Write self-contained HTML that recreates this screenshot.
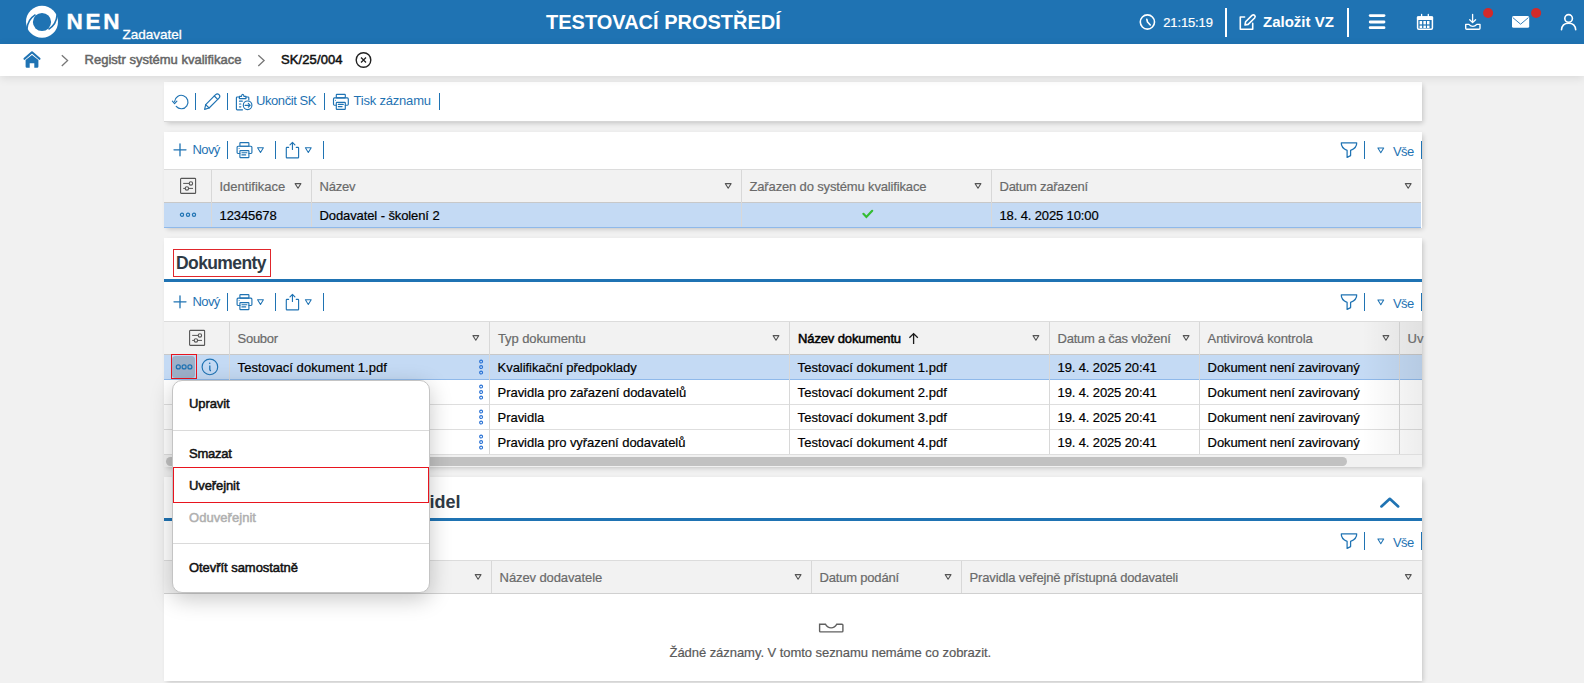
<!DOCTYPE html>
<html><head><meta charset="utf-8">
<style>
*{box-sizing:border-box;margin:0;padding:0}
html,body{width:1584px;height:683px;overflow:hidden;background:#f1f1f1;font-family:"Liberation Sans",sans-serif;font-size:13px;color:#000}
.a{position:absolute}
.t{position:absolute;white-space:nowrap;line-height:15px;font-size:13px;-webkit-text-stroke:0.2px currentColor}
.b{font-weight:bold;-webkit-text-stroke:0}
#hdr{left:0;top:0;width:1584px;height:44px;background:#1f73b3}
#bc{left:0;top:44px;width:1584px;height:32px;background:#fff;box-shadow:0 2px 9px rgba(0,0,0,.1);z-index:5}
.panel{position:absolute;left:164px;width:1258px;background:#fff;box-shadow:2px 2px 5px -1px rgba(0,0,0,.2)}
.sep{position:absolute;width:2px;background:#1f73b3}
.hsep{position:absolute;width:2px;background:#fff}
.blue{color:#1f73b3;-webkit-text-stroke:0}
.thd{position:absolute;background:#f2f2f2;border-top:1px solid #dcdcdc;border-bottom:1px solid #d0d0d0}
.vl{position:absolute;width:1px;background:#d8d8d8}
.hl{position:absolute;height:1px;background:#dedede}
.gh{color:#6a6a6a}
.m{-webkit-text-stroke:0.5px currentColor}
svg{position:absolute;overflow:visible}
</style></head><body>
<svg width="0" height="0" style="position:absolute">
<defs>
 <g id="printer" fill="none" stroke="#1f73b3" stroke-width="1.15" stroke-linejoin="round">
  <rect x="3" y="0.3" width="9" height="3.6" rx=".6"/>
  <path d="M3 11.2 H1.1 Q0.2 11.2 0.2 10.3 V4.9 Q0.2 3.9 1.2 3.9 H14 Q15 3.9 15 4.9 V10.3 Q15 11.2 14.1 11.2 H12"/>
  <rect x="3" y="8.3" width="9" height="7" rx=".6"/>
  <path d="M5 10.4 H10 M5 12.6 H8.8" stroke-width="1.1"/>
  <circle cx="2.2" cy="6.2" r=".5" fill="#1f73b3" stroke="none"/>
 </g>
 <g id="share" fill="none" stroke="#1f73b3" stroke-width="1.15" stroke-linejoin="round" stroke-linecap="round">
  <path d="M2.6 5.4 H0.9 Q0.3 5.4 0.3 6 V15.2 Q0.3 15.8 0.9 15.8 H12 Q12.6 15.8 12.6 15.2 V6 Q12.6 5.4 12 5.4 H10.3"/>
  <path d="M6.45 0.4 V7.4 M4 2.8 L6.45 0.4 L8.9 2.8"/>
 </g>
 <path id="tri" d="M0.6 0.6 H6.4 L3.5 5.3 Z" fill="none" stroke-width="1.05" stroke-linejoin="round"/>
 <g id="funnel" fill="none" stroke="#1f73b3" stroke-width="1.25" stroke-linejoin="round">
  <path d="M0.3 0.8 H15.7 Q16 6 9.6 8.4 V13.6 L6.1 15.4 V8.4 Q0 6 0.3 0.8 Z"/>
 </g>
 <g id="settings" fill="none" stroke="#555" stroke-width="1.1">
  <rect x="0.6" y="0.4" width="15" height="15" rx="0.7"/>
  <path d="M3.2 5.4 H9.2 M12.6 5.4 H13 M3.2 10.4 H5.2 M8.6 10.4 H13" stroke-width="1"/>
  <circle cx="10.9" cy="5.4" r="1.7"/>
  <circle cx="6.9" cy="10.4" r="1.7"/>
 </g>
 <g id="dotsh" fill="none" stroke="#1f73b3" stroke-width="1.2">
  <circle cx="2" cy="2" r="1.6"/><circle cx="8" cy="2" r="1.6"/><circle cx="14" cy="2" r="1.6"/>
 </g>
 <g id="dotsv" fill="none" stroke="#2670d4" stroke-width="1.1">
  <circle cx="2" cy="1.9" r="1.45"/><circle cx="2" cy="7.4" r="1.45"/><circle cx="2" cy="12.9" r="1.45"/>
 </g>
</defs></svg>
<!-- HEADER -->
<div id="hdr" class="a"></div>
<svg style="left:0;top:0" width="1584" height="44">
 <circle cx="42" cy="21.8" r="16" fill="#fff"/>
 <circle cx="42" cy="22" r="9.1" fill="#1f73b3"/>
 <path d="M35.5 14.6 Q27.5 19.5 26.8 29.5" stroke="#1f73b3" stroke-width="1.7" fill="none"/>
 <path d="M48.5 29.4 Q56.5 24.5 57.2 14.5" stroke="#1f73b3" stroke-width="1.7" fill="none"/>
</svg>
<div class="t b" style="left:66.5px;top:9.3px;font-size:22.5px;line-height:26px;color:#fff;letter-spacing:2.7px;-webkit-text-stroke:0.4px #fff">NEN</div>
<div class="t" style="left:122.5px;top:27px;font-size:13.5px;line-height:15px;color:#fff;-webkit-text-stroke:0.3px #fff">Zadavatel</div>
<div class="t b" style="left:546px;top:11px;font-size:20px;line-height:23px;color:#fff">TESTOVACÍ PROSTŘEDÍ</div>
<svg style="left:0;top:0" width="1584" height="44" fill="none" stroke="#fff" stroke-width="1.6" stroke-linecap="round" stroke-linejoin="round">
 <circle cx="1147.4" cy="22" r="7.1"/>
 <path d="M1146.8 19.3 L1147.5 22 L1150.3 25"/>
 <path d="M1244.6 17 H1240.3 V29.3 H1252.7 V23.4"/>
 <path d="M1245 25 L1245.6 21.8 L1252 15.4 Q1253.4 14.2 1254.6 15.4 Q1255.8 16.6 1254.6 18 L1248.2 24.4 Z"/>
 <path d="M1370.2 15.6 H1384" stroke-width="2.8"/>
 <path d="M1370.2 22 H1384" stroke-width="2.8"/>
 <path d="M1370.2 27.7 H1384" stroke-width="2.8"/>
 <rect x="1417.6" y="17" width="14.8" height="12.2" rx="1.2" stroke-width="1.5"/>
 <rect x="1416.9" y="16.3" width="16.2" height="3.6" rx="1" fill="#fff" stroke="none"/>
 <path d="M1421.6 14.3 V17.5 M1428.3 14.3 V17.5" stroke-width="1.3"/>
 <g fill="#fff" stroke="none">
  <rect x="1419.6" y="21" width="2.5" height="3.4"/><rect x="1423.4" y="21" width="2.5" height="3.4"/><rect x="1427" y="21" width="2.5" height="3.4"/>
  <rect x="1419.6" y="25.6" width="2.5" height="2.4"/><rect x="1423.4" y="25.6" width="2.5" height="2.4"/><rect x="1427" y="25.6" width="2.5" height="2.4"/>
 </g>
 <path d="M1472.6 14.3 V22.4 M1469.7 19.7 L1472.6 22.6 L1475.6 19.7" stroke-width="1.3"/>
 <path d="M1465.7 24.4 V28.2 Q1465.7 29.2 1466.7 29.2 H1479 Q1480 29.2 1480 28.2 V24.4 H1476.8 Q1475 26.4 1472.85 26.4 Q1470.7 26.4 1468.9 24.4 Z" stroke-width="1.4"/>
 <circle cx="1568.6" cy="18.4" r="3.8"/>
 <path d="M1561.5 29.8 Q1562 23.2 1568.6 23.2 Q1575.2 23.2 1575.7 29.8"/>
</svg>
<svg style="left:0;top:0" width="1584" height="44">
 <rect x="1512" y="16" width="17.2" height="11.8" rx="1.6" fill="#fff"/>
 <path d="M1512.8 17.6 L1520.6 24.2 L1528.4 17.6" stroke="#1f73b3" stroke-width="0.9" fill="none"/>
 <circle cx="1488.1" cy="13" r="5" fill="#d22a2a"/>
 <circle cx="1536.1" cy="13" r="5" fill="#d22a2a"/>
</svg>
<div class="t" style="left:1163.2px;top:15px;color:#fff;letter-spacing:-0.12px">21:15:19</div>
<div class="hsep" style="left:1225px;top:8px;height:29px"></div>
<div class="t b" style="left:1263px;top:13.2px;font-size:15px;line-height:17px;color:#fff">Založit VZ</div>
<div class="hsep" style="left:1347px;top:8px;height:29px"></div>
<div id="bc" class="a"></div>
<svg style="left:0;top:44px;z-index:6" width="400" height="32">
 <path d="M24.5 14.8 L32 8.3 L39.5 14.8" stroke="#1f73b3" stroke-width="2.1" fill="none" stroke-linecap="round" stroke-linejoin="round"/>
 <path d="M25.6 16 L32 10.9 L38.4 16 V22.6 Q38.4 23.8 37.2 23.8 H34.3 V19.2 H29.7 V23.8 H26.8 Q25.6 23.8 25.6 22.6 Z" fill="#1f73b3"/>
 <path d="M61.8 11.2 L67.6 16.6 L61.8 22" stroke="#777" stroke-width="1.3" fill="none"/>
 <path d="M258.3 11.2 L264.1 16.6 L258.3 22" stroke="#777" stroke-width="1.3" fill="none"/>
 <circle cx="363.5" cy="16" r="7.3" stroke="#222" stroke-width="1.4" fill="none"/>
 <path d="M361 13.5 L366 18.5 M366 13.5 L361 18.5" stroke="#222" stroke-width="1.3"/>
</svg>
<div class="t m" style="z-index:6;left:84.6px;top:52.2px;color:#666;letter-spacing:0px">Registr systému kvalifikace</div>
<div class="t m" style="z-index:6;left:281px;top:52.2px;color:#111;letter-spacing:0.1px">SK/25/004</div>

<!-- PANELS -->
<div class="panel" style="top:82px;height:40px;border-bottom:1px solid #d6d6d6"></div>
<div class="panel" style="top:132px;height:96px"></div>
<div class="panel" style="top:238px;height:229px"></div>
<div class="panel" style="top:477px;height:204px"></div>


<!-- PANEL 1 toolbar -->
<svg style="left:0;top:0" width="1584" height="683" fill="none" stroke="#1f73b3" stroke-width="1.15" stroke-linecap="round" stroke-linejoin="round">
 <path d="M174.6 101.5 A6.7 6.7 0 1 1 176.2 106.4"/>
 <path d="M172.4 101.2 L174.6 103.6 L176.9 101.2"/>
 <path d="M204.6 109.4 L205.7 104.6 L215.6 94.7 Q217.3 93 219 94.7 Q220.7 96.4 219 98.1 L209.1 108 Z"/>
 <path d="M205.7 104.6 L209.1 108 M214.3 96 L217.7 99.4"/>
 <path d="M239.4 97 H237.2 Q236.4 97 236.4 97.8 V109 Q236.4 109.8 237.2 109.8 H242.5"/>
 <path d="M246 97 H248 Q248.8 97 248.8 97.8 V100"/>
 <path d="M239.4 98.6 V96.3 H241.5 Q241.6 94.3 242.7 94.3 Q243.8 94.3 243.9 96.3 H246 V98.6 Z"/>
 <path d="M239.5 101.2 H242.3 M239.5 104 H240.8 M239.5 106.8 H240.8" stroke-width="1.2"/>
 <circle cx="247.6" cy="105.3" r="4.3"/>
 <path d="M245 105.3 H250.2 M248.3 103.4 L250.2 105.3 L248.3 107.2"/>
 <use href="#printer" x="333.3" y="94"/>
</svg>
<div class="sep" style="left:194.6px;top:93.2px;height:16.5px;width:1.4px"></div>
<div class="sep" style="left:226.6px;top:93.2px;height:16.5px;width:1.4px"></div>
<div class="t blue" style="left:256px;top:93.2px;letter-spacing:-0.43px">Ukončit SK</div>
<div class="sep" style="left:323.5px;top:93.2px;height:16.5px;width:1.4px"></div>
<div class="t blue" style="left:353.5px;top:93.2px;letter-spacing:-0.2px">Tisk záznamu</div>
<div class="sep" style="left:438.8px;top:93.2px;height:16.5px;width:1.4px"></div>

<!-- PANEL 2 -->
<svg style="left:0;top:0" width="1584" height="683" fill="none" stroke="#1f73b3" stroke-width="1.3" stroke-linecap="round">
 <path d="M180 143.8 V155.8 M174 149.8 H186"/>
 <use href="#printer" x="236.9" y="142.3"/>
 <use href="#tri" x="257" y="147.2" stroke="#1f73b3"/>
 <use href="#share" x="286" y="142"/>
 <use href="#tri" x="304.8" y="147.2" stroke="#1f73b3"/>
 <use href="#funnel" x="1341" y="142"/>
 <use href="#tri" x="1377.3" y="147.4" stroke="#1f73b3"/>
</svg>
<div class="t blue" style="left:192.5px;top:142px;letter-spacing:-0.6px">Nový</div>
<div class="sep" style="left:226.7px;top:141.3px;height:17.4px;width:1.4px"></div>
<div class="sep" style="left:274.7px;top:141.3px;height:17.4px;width:1.4px"></div>
<div class="sep" style="left:322.7px;top:141.3px;height:17.4px;width:1.4px"></div>
<div class="sep" style="left:1363.7px;top:141.3px;height:17.4px;width:1.4px"></div>
<div class="t blue" style="left:1393px;top:143.8px;letter-spacing:-0.6px">Vše</div>
<div class="sep" style="left:1420.5px;top:141.3px;height:17.4px;width:1.4px"></div>
<!-- table 1 -->
<div class="thd" style="left:164px;top:169px;width:1257px;height:34px"></div>
<div class="a" style="left:164px;top:202px;width:1257px;height:26px;background:#c4daf4;border-top:1px solid #c8c8c8;border-bottom:1px solid #8fb9ea"></div>
<div class="vl" style="left:211px;top:170px;height:57px"></div>
<div class="vl" style="left:311px;top:170px;height:57px"></div>
<div class="vl" style="left:741px;top:170px;height:57px"></div>
<div class="vl" style="left:991px;top:170px;height:57px"></div>
<svg style="left:0;top:0" width="1584" height="683" stroke="#555">
 <use href="#settings" x="180" y="178"/>
 <use href="#tri" x="294.5" y="183" stroke="#555"/>
 <use href="#tri" x="724.7" y="183" stroke="#555"/>
 <use href="#tri" x="974.5" y="183" stroke="#555"/>
 <use href="#tri" x="1404.7" y="183" stroke="#555"/>
 <use href="#dotsh" x="180" y="212.8"/>
 <path d="M863.4 213.8 L866.4 217 L872.2 210.8" stroke="#34bd33" stroke-width="2.2" fill="none" stroke-linecap="round"/>
</svg>
<div class="t gh" style="left:219.5px;top:178.8px">Identifikace</div>
<div class="t gh" style="left:319.5px;top:178.8px;letter-spacing:-0.2px">Název</div>
<div class="t gh" style="left:749.5px;top:178.8px;letter-spacing:-0.15px">Zařazen do systému kvalifikace</div>
<div class="t gh" style="left:999.5px;top:178.8px;letter-spacing:-0.25px">Datum zařazení</div>
<div class="t" style="left:219.5px;top:208px;letter-spacing:-0.1px">12345678</div>
<div class="t" style="left:319.5px;top:208px;letter-spacing:-0.1px">Dodavatel - školení 2</div>
<div class="t" style="left:999.5px;top:208px;letter-spacing:-0.13px">18. 4. 2025 10:00</div>

<!-- PANEL 3 -->
<div class="t b" style="left:176px;top:253px;font-size:17.5px;line-height:21px;color:#2f3a45;letter-spacing:-0.6px">Dokumenty</div>
<div class="a" style="left:173px;top:249px;width:98px;height:28px;border:1px solid #e0262c"></div>
<div class="a" style="left:164px;top:279px;width:1258px;height:3px;background:#1f73b3"></div>
<svg style="left:0;top:152px" width="1584" height="400" fill="none" stroke="#1f73b3" stroke-width="1.3" stroke-linecap="round">
 <path d="M180 143.8 V155.8 M174 149.8 H186"/>
 <use href="#printer" x="236.9" y="142.3"/>
 <use href="#tri" x="257" y="147.2" stroke="#1f73b3"/>
 <use href="#share" x="286" y="142"/>
 <use href="#tri" x="304.8" y="147.2" stroke="#1f73b3"/>
 <use href="#funnel" x="1341" y="142"/>
 <use href="#tri" x="1377.3" y="147.4" stroke="#1f73b3"/>
</svg>
<div class="t blue" style="left:192.5px;top:294px;letter-spacing:-0.6px">Nový</div>
<div class="sep" style="left:226.7px;top:293.3px;height:17.4px;width:1.4px"></div>
<div class="sep" style="left:274.7px;top:293.3px;height:17.4px;width:1.4px"></div>
<div class="sep" style="left:322.7px;top:293.3px;height:17.4px;width:1.4px"></div>
<div class="sep" style="left:1363.7px;top:293.3px;height:17.4px;width:1.4px"></div>
<div class="t blue" style="left:1393px;top:295.8px;letter-spacing:-0.6px">Vše</div>
<div class="sep" style="left:1420.5px;top:293.3px;height:17.4px;width:1.4px"></div>
<!-- table 3 -->
<div class="thd" style="left:164px;top:321px;width:1258px;height:34px"></div>
<div class="a" style="left:164px;top:354px;width:1258px;height:26px;background:#c4daf4;border-top:1px solid #c8c8c8;border-bottom:1px solid #8fb9ea"></div>
<div class="hl" style="left:164px;top:404px;width:1258px"></div>
<div class="hl" style="left:164px;top:429px;width:1258px"></div>
<div class="hl" style="left:164px;top:454px;width:1258px"></div>
<div class="vl" style="left:229px;top:322px;height:132px"></div>
<div class="vl" style="left:489px;top:322px;height:132px"></div>
<div class="vl" style="left:789px;top:322px;height:132px"></div>
<div class="vl" style="left:1049px;top:322px;height:132px"></div>
<div class="vl" style="left:1199px;top:322px;height:132px"></div>
<div class="vl" style="left:1399px;top:322px;height:132px"></div>
<div class="a" style="left:1362px;top:322px;width:60px;height:132px;background:linear-gradient(to right,rgba(0,0,0,0),rgba(0,0,0,.07))"></div>
<div class="a" style="left:172.3px;top:355.5px;width:23.2px;height:22px;background:#9db1c9;border-radius:3.5px"></div>
<div class="a" style="left:171px;top:354px;width:26px;height:25px;border:1.3px solid #e8141e"></div>
<svg style="left:0;top:0" width="1584" height="683" stroke="#555">
 <use href="#settings" x="189" y="330"/>
 <use href="#tri" x="472.3" y="335" stroke="#555"/>
 <use href="#tri" x="772.5" y="335" stroke="#555"/>
 <use href="#tri" x="1032.4" y="335" stroke="#555"/>
 <use href="#tri" x="1182.6" y="335" stroke="#555"/>
 <use href="#tri" x="1382.4" y="335" stroke="#555"/>
 <path d="M913.6 344 V333.6 M909.4 337.8 L913.6 333.6 L917.8 337.8" stroke="#1a1a1a" stroke-width="1.3" fill="none"/>
 <g fill="none" stroke="#1f73b3" stroke-width="1.2">
  <circle cx="178.3" cy="366.9" r="2"/><circle cx="184.1" cy="366.9" r="2"/><circle cx="189.9" cy="366.9" r="2"/>
  <circle cx="209.9" cy="366.9" r="7.8" stroke-width="1.15"/>
  <path d="M209.8 365.4 V369.6 Q209.8 370.6 211 370.8" stroke-width="1.3"/>
 </g>
 <circle cx="209.7" cy="363.2" r=".8" fill="#1f73b3" stroke="none"/>
 <use href="#dotsv" x="479.1" y="359.7"/>
 <use href="#dotsv" x="479.1" y="384.7"/>
 <use href="#dotsv" x="479.1" y="409.7"/>
 <use href="#dotsv" x="479.1" y="434.7"/>
</svg>
<div class="t gh" style="left:237.6px;top:330.8px;letter-spacing:-0.3px">Soubor</div>
<div class="t gh" style="left:498px;top:330.8px;letter-spacing:-0.1px">Typ dokumentu</div>
<div class="t m" style="left:798px;top:330.8px;letter-spacing:-0.12px">Název dokumentu</div>
<div class="t gh" style="left:1057.6px;top:330.8px;letter-spacing:-0.25px">Datum a čas vložení</div>
<div class="t gh" style="left:1207.6px;top:330.8px;letter-spacing:-0.1px">Antivirová kontrola</div>
<div class="t gh" style="left:1407.6px;top:330.8px">Uv</div>
<div class="t" style="left:237.6px;top:360px;letter-spacing:0.05px">Testovací dokument 1.pdf</div>
<div class="t" style="left:497.6px;top:360px;letter-spacing:-0.05px">Kvalifikační předpoklady</div>
<div class="t" style="left:797.6px;top:360px;letter-spacing:0.05px">Testovací dokument 1.pdf</div>
<div class="t" style="left:1057.6px;top:360px;letter-spacing:-0.13px">19. 4. 2025 20:41</div>
<div class="t" style="left:1207.6px;top:360px;letter-spacing:-0.08px">Dokument není zavirovaný</div>
<div class="t" style="left:497.6px;top:385px;letter-spacing:-0.05px">Pravidla pro zařazení dodavatelů</div>
<div class="t" style="left:797.6px;top:385px;letter-spacing:0.05px">Testovací dokument 2.pdf</div>
<div class="t" style="left:1057.6px;top:385px;letter-spacing:-0.13px">19. 4. 2025 20:41</div>
<div class="t" style="left:1207.6px;top:385px;letter-spacing:-0.08px">Dokument není zavirovaný</div>
<div class="t" style="left:497.6px;top:410px;letter-spacing:-0.05px">Pravidla</div>
<div class="t" style="left:797.6px;top:410px;letter-spacing:0.05px">Testovací dokument 3.pdf</div>
<div class="t" style="left:1057.6px;top:410px;letter-spacing:-0.13px">19. 4. 2025 20:41</div>
<div class="t" style="left:1207.6px;top:410px;letter-spacing:-0.08px">Dokument není zavirovaný</div>
<div class="t" style="left:497.6px;top:435px;letter-spacing:-0.05px">Pravidla pro vyřazení dodavatelů</div>
<div class="t" style="left:797.6px;top:435px;letter-spacing:0.05px">Testovací dokument 4.pdf</div>
<div class="t" style="left:1057.6px;top:435px;letter-spacing:-0.13px">19. 4. 2025 20:41</div>
<div class="t" style="left:1207.6px;top:435px;letter-spacing:-0.08px">Dokument není zavirovaný</div>
<div class="a" style="left:164px;top:455px;width:1258px;height:12px;background:#f1f1f1"></div>
<div class="a" style="left:166px;top:457px;width:1181px;height:8.5px;background:#c1c1c1;border-radius:4.5px"></div>

<!-- PANEL 4 -->
<div class="t b" style="left:429.6px;top:492px;font-size:18px;line-height:21px;color:#2f3a45;letter-spacing:0px">idel</div>
<svg style="left:0;top:0" width="1584" height="683" fill="none" stroke="#1f73b3" stroke-linecap="round" stroke-linejoin="round">
 <path d="M1381.4 506.4 L1389.8 498.8 L1398.2 506.4" stroke-width="2.7"/>
</svg>
<div class="a" style="left:164px;top:518px;width:1258px;height:3px;background:#1f73b3"></div>
<svg style="left:0;top:391px" width="1584" height="292" fill="none" stroke="#1f73b3" stroke-width="1.3" stroke-linecap="round">
 <use href="#funnel" x="1341" y="142"/>
 <use href="#tri" x="1377.3" y="147.4" stroke="#1f73b3"/>
</svg>
<div class="sep" style="left:1363.7px;top:532.3px;height:17.4px;width:1.4px"></div>
<div class="t blue" style="left:1393px;top:534.8px;letter-spacing:-0.6px">Vše</div>
<div class="sep" style="left:1420.5px;top:532.3px;height:17.4px;width:1.4px"></div>
<div class="thd" style="left:164px;top:560px;width:1258px;height:34px"></div>
<div class="vl" style="left:491px;top:561px;height:32px"></div>
<div class="vl" style="left:811px;top:561px;height:32px"></div>
<div class="vl" style="left:961px;top:561px;height:32px"></div>
<svg style="left:0;top:0" width="1584" height="683" stroke="#555">
 <use href="#tri" x="474.6" y="574" stroke="#555"/>
 <use href="#tri" x="794.6" y="574" stroke="#555"/>
 <use href="#tri" x="944.6" y="574" stroke="#555"/>
 <use href="#tri" x="1404.8" y="574" stroke="#555"/>
 <path d="M819.6 624.2 H825.4 Q827.4 627.9 831.1 627.9 Q834.8 627.9 836.8 624.2 H842 Q842.9 624.2 842.9 625.1 V631 Q842.9 631.9 842 631.9 H820.5 Q819.6 631.9 819.6 631 Z" fill="none" stroke="#606060" stroke-width="1.4"/>
</svg>
<div class="t gh" style="left:499.6px;top:569.8px;letter-spacing:-0.1px">Název dodavatele</div>
<div class="t gh" style="left:819.6px;top:569.8px;letter-spacing:-0.2px">Datum podání</div>
<div class="t gh" style="left:969.6px;top:569.8px;letter-spacing:-0.15px">Pravidla veřejně přístupná dodavateli</div>
<div class="t" style="left:669.5px;top:644.7px;color:#5a5a5a;letter-spacing:-0.05px">Žádné záznamy. V tomto seznamu nemáme co zobrazit.</div>

<!-- MENU -->
<div class="a" style="left:172px;top:380px;width:258px;height:213px;background:#fff;border:1px solid #c4c4c4;border-radius:10px;box-shadow:0 6px 22px rgba(0,0,0,.22)"></div>
<div class="a" style="left:173px;top:430px;width:256px;height:1px;background:#dadada"></div>
<div class="a" style="left:173px;top:543px;width:256px;height:1px;background:#dadada"></div>
<div class="a" style="left:173px;top:467px;width:256px;height:36px;border:1.3px solid #e8141e"></div>
<div class="t m" style="left:189px;top:396px;color:#111;letter-spacing:-0.1px">Upravit</div>
<div class="t m" style="left:189px;top:446.3px;color:#111;letter-spacing:-0.25px">Smazat</div>
<div class="t m" style="left:189px;top:478.3px;color:#111;letter-spacing:-0.1px">Uveřejnit</div>
<div class="t m" style="left:189px;top:509.9px;color:#b0b0b0;letter-spacing:0.05px">Oduveřejnit</div>
<div class="t m" style="left:189px;top:559.7px;color:#111;letter-spacing:-0.05px">Otevřít samostatně</div>
</body></html>
